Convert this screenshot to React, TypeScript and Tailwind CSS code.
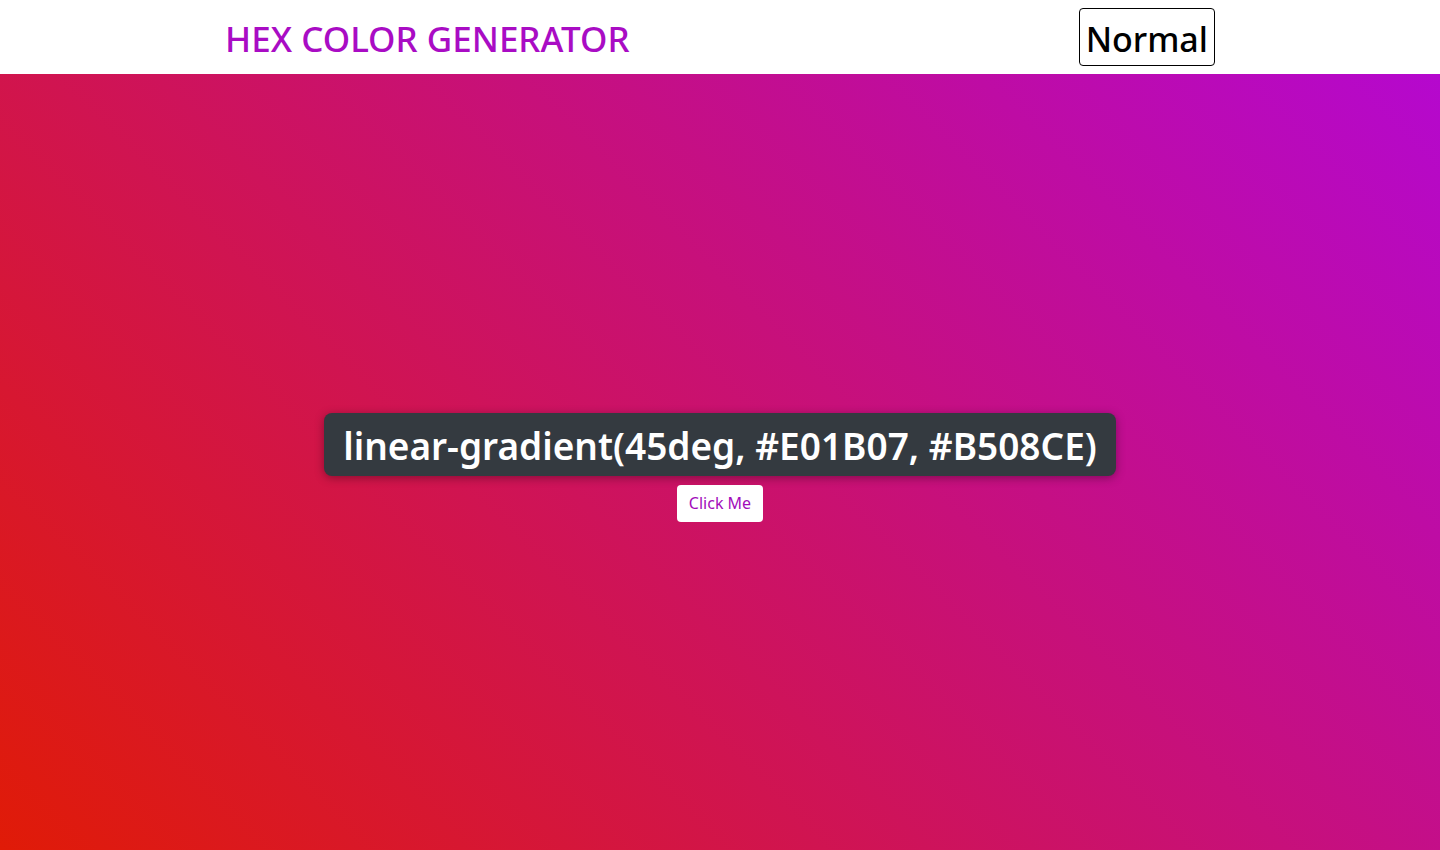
export default function App() {
  return (
    <div className="flex h-[850px] w-full flex-col" style={{ fontFamily: '"Noto Sans", "Open Sans", sans-serif' }}>
      <header className="flex h-[74px] items-center justify-between bg-white pl-[225px] pr-[225px]">
        <h1 className="mt-[3px] text-[35px] font-medium leading-none text-[#a90cc4]">HEX COLOR GENERATOR</h1>
        <button className="h-[58px] rounded-[4px] border border-black bg-white px-[6px] pt-[3px] text-[34px] font-medium leading-none text-black">
          Normal
        </button>
      </header>
      <main className="flex flex-1 flex-col items-center justify-center gap-[9px] bg-[linear-gradient(45deg,#E01B07,#B508CE)] pt-[10px]">
        <div className="flex h-[63px] items-center rounded-[8px] bg-[#343a40] px-[19px] pt-[2px] text-[37px] font-semibold leading-none text-white shadow-[0_2px_10px_rgba(0,0,0,0.35)]">
          linear-gradient(45deg, #E01B07, #B508CE)
        </div>
        <button className="h-[37px] rounded-[4px] bg-white px-[12px] text-[16px] leading-none text-[#a20cba]">Click Me</button>
      </main>
    </div>
  );
}
